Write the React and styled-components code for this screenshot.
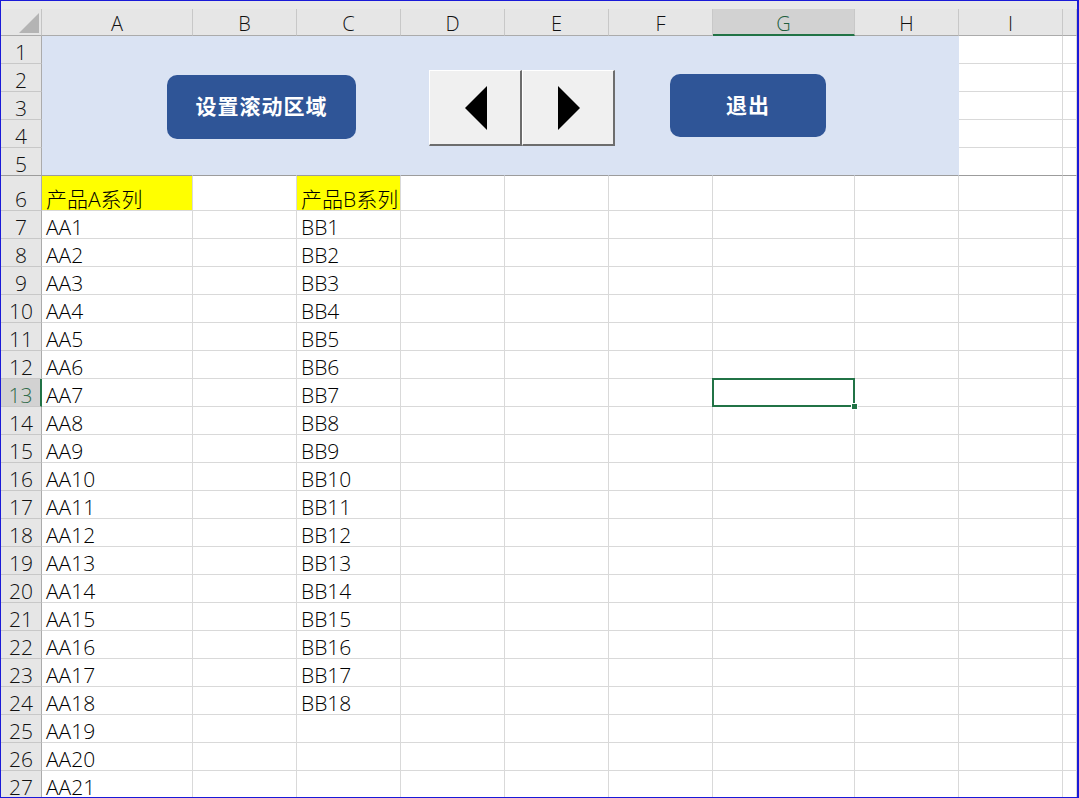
import React from 'react';
import styled, { createGlobalStyle } from 'styled-components';

const GlobalStyle = createGlobalStyle`
  html, body {
    margin: 0;
    padding: 0;
    background: #ffffff;
  }
  body {
    font-family: "Open Sans", "Noto Sans CJK SC", sans-serif;
  }
`;

const Frame = styled.div`
  position: relative;
  width: 1079px;
  height: 798px;
  box-sizing: border-box;
  border: 1px solid #1a1ad8;
  border-right-width: 2px;
  overflow: hidden;
  background: #ffffff;
`;

const TopStrip = styled.div`
  height: 8px;
  background: #e9e9e9;
`;

const Sheet = styled.div`
  display: grid;
  grid-template-columns: 41px 151px 104px 104px 104px 104px 104px 142px 104px 104px 1fr;
  grid-template-rows: 27px repeat(5, 28px) 35px repeat(21, 28px);
  font-size: 21px;
  font-weight: 300;
  color: #000;
`;

const Corner = styled.div`
  position: relative;
  background: #e6e6e6;
  border-right: 1px solid #c4c4c4;
  border-bottom: 1px solid #ababab;
`;

const CornerTriangle = styled.svg`
  position: absolute;
  right: 2px;
  bottom: 2px;
`;

const ColHeader = styled.div`
  display: flex;
  align-items: center;
  justify-content: center;
  background: ${p => (p.$selected ? '#d2d2d2' : '#e6e6e6')};
  color: ${p => (p.$selected ? '#215e3c' : '#111')};
  border-right: 1px solid #c8c8c8;
  border-bottom: ${p => (p.$selected ? '2px solid #217346' : '1px solid #ababab')};
  box-sizing: border-box;
  font-size: 20px;
  line-height: 1;
  padding-top: 4px;
`;

const RowHeader = styled.div`
  display: flex;
  align-items: flex-end;
  justify-content: center;
  box-sizing: border-box;
  background: ${p => (p.$selected ? '#d2d2d2' : '#e6e6e6')};
  color: ${p => (p.$selected ? '#2f6b4a' : '#111')};
  border-right: ${p => (p.$selected ? '2px solid #217346' : '1px solid #ababab')};
  border-bottom: 1px solid ${p => (p.$frozen ? '#9c9c9c' : '#c8c8c8')};
  font-size: 21px;
  line-height: 1;
`;

const Cell = styled.div`
  position: relative;
  display: flex;
  align-items: flex-end;
  padding: 0 0 0 4px;
  box-sizing: border-box;
  white-space: nowrap;
  line-height: 1;
  background: ${p => (p.$band ? '#dae3f3' : p.$fill || '#ffffff')};
  border-right: 1px solid ${p => (p.$band ? '#dae3f3' : '#d9d9d9')};
  border-bottom: 1px solid
    ${p => (p.$frozen ? '#9c9c9c' : p.$band ? '#dae3f3' : '#d9d9d9')};

  ${p =>
    p.$selected &&
    `
    &::after {
      content: '';
      position: absolute;
      left: -1px;
      top: -1px;
      right: -1px;
      bottom: -1px;
      border: 2px solid #217346;
      pointer-events: none;
    }
    &::before {
      content: '';
      position: absolute;
      right: -4px;
      bottom: -4px;
      width: 5px;
      height: 5px;
      background: #217346;
      border: 1px solid #ffffff;
      z-index: 2;
    }
  `}
`;

const BlueButton = styled.div`
  position: absolute;
  left: ${p => p.$left}px;
  top: ${p => p.$top}px;
  width: ${p => p.$width}px;
  height: ${p => p.$height}px;
  box-sizing: border-box;
  padding-bottom: 4px;
  display: flex;
  align-items: center;
  justify-content: center;
  background: #2f5597;
  border-radius: 10px;
  color: #ffffff;
  font-family: "Noto Sans CJK SC", sans-serif;
  font-size: 21px;
  font-weight: 700;
  letter-spacing: 1px;
`;

const ArrowGroup = styled.div`
  position: absolute;
  left: 428px;
  top: 69px;
  display: flex;
`;

const ArrowButton = styled.div`
  width: 93px;
  height: 76px;
  box-sizing: border-box;
  display: flex;
  align-items: center;
  justify-content: center;
  padding-left: ${p => p.$shift || 0}px;
  background: #f0f0f0;
  border-top: 1px solid #ffffff;
  border-left: 1px solid #ffffff;
  border-right: 2px solid #6d6d6d;
  border-bottom: 2px solid #6d6d6d;
`;

const columns = ['A', 'B', 'C', 'D', 'E', 'F', 'G', 'H', 'I', ''];

const colA = { 6: '产品A系列' };
for (let i = 1; i <= 21; i++) colA[6 + i] = `AA${i}`;
const colC = { 6: '产品B系列' };
for (let i = 1; i <= 18; i++) colC[6 + i] = `BB${i}`;

const rows = Array.from({ length: 27 }, (_, i) => i + 1);

const App = () => {
  return (
    <>
      <GlobalStyle />
      <Frame>
        <TopStrip />
        <Sheet>
          <Corner>
            <CornerTriangle width="20" height="20" viewBox="0 0 20 20">
              <polygon points="20,0 20,20 0,20" fill="#b4b4b4" />
            </CornerTriangle>
          </Corner>
          {columns.map((c, i) => (
            <ColHeader key={'h' + i} $selected={c === 'G'}>
              {c}
            </ColHeader>
          ))}
          {rows.map(r => (
            <React.Fragment key={r}>
              <RowHeader $selected={r === 13} $frozen={r === 5}>
                {r}
              </RowHeader>
              {columns.map((c, ci) => {
                const band = r <= 5 && ci < 8;
                let text = '';
                if (c === 'A') text = colA[r] || '';
                if (c === 'C') text = colC[r] || '';
                const fill = r === 6 && (c === 'A' || c === 'C') ? '#ffff00' : null;
                return (
                  <Cell
                    key={r + '-' + ci}
                    $band={band}
                    $fill={fill}
                    $frozen={r === 5}
                    $selected={r === 13 && c === 'G'}
                  >
                    {text}
                  </Cell>
                );
              })}
            </React.Fragment>
          ))}
        </Sheet>

        <BlueButton $left={166} $top={74} $width={189} $height={64}>
          设置滚动区域
        </BlueButton>

        <ArrowGroup>
          <ArrowButton $shift={3}>
            <svg width="24" height="44" viewBox="0 0 24 44">
              <polygon points="22,0 22,44 0,22" fill="#000" />
            </svg>
          </ArrowButton>
          <ArrowButton $shift={2}>
            <svg width="24" height="44" viewBox="0 0 24 44">
              <polygon points="1,0 1,44 23,22" fill="#000" />
            </svg>
          </ArrowButton>
        </ArrowGroup>

        <BlueButton $left={669} $top={73} $width={156} $height={63}>
          退出
        </BlueButton>
      </Frame>
    </>
  );
};

export default App;
